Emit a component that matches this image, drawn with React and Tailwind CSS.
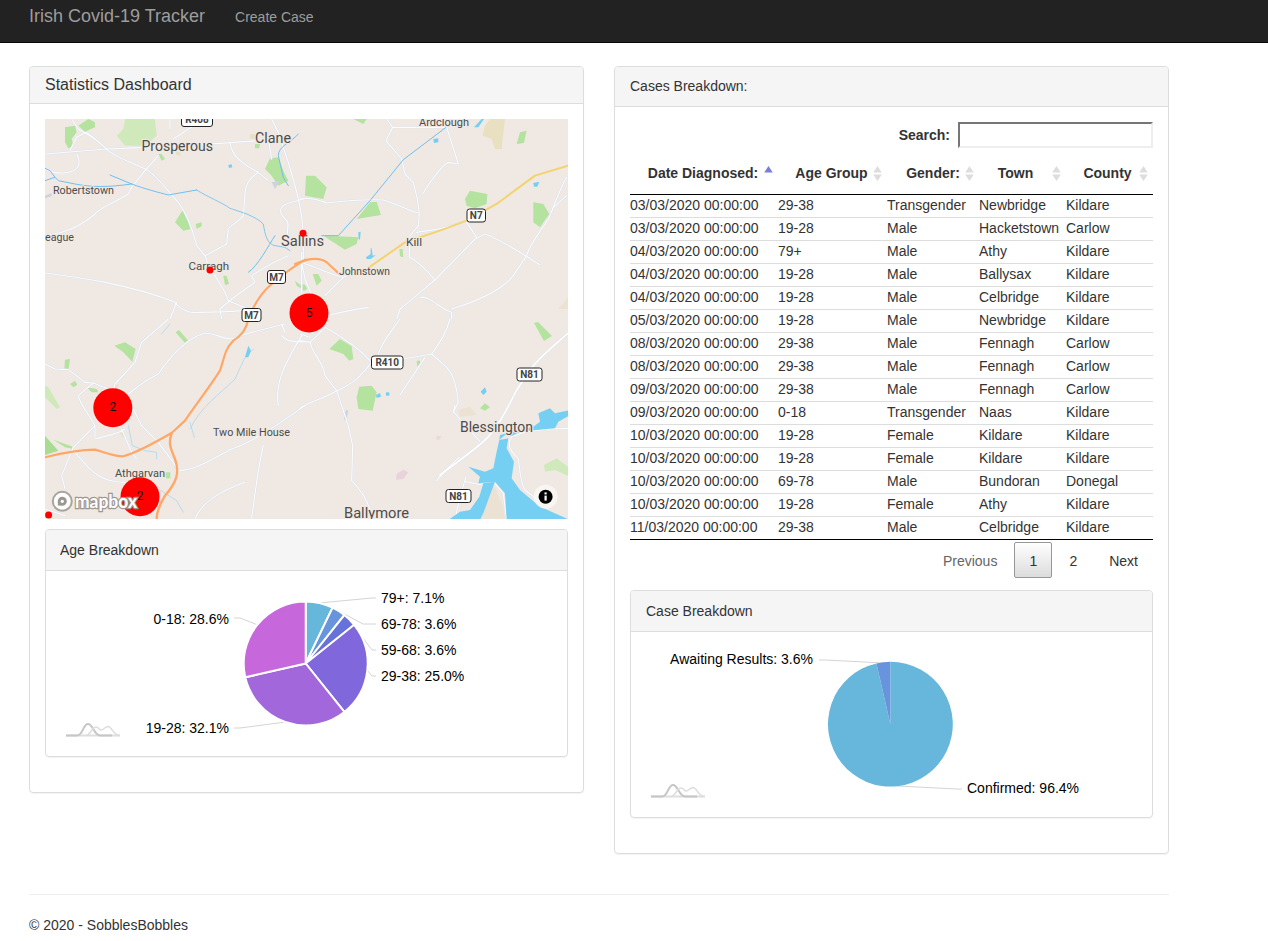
const rows = [
  ["03/03/2020 00:00:00", "29-38", "Transgender", "Newbridge", "Kildare"],
  ["03/03/2020 00:00:00", "19-28", "Male", "Hacketstown", "Carlow"],
  ["04/03/2020 00:00:00", "79+", "Male", "Athy", "Kildare"],
  ["04/03/2020 00:00:00", "19-28", "Male", "Ballysax", "Kildare"],
  ["04/03/2020 00:00:00", "19-28", "Male", "Celbridge", "Kildare"],
  ["05/03/2020 00:00:00", "19-28", "Male", "Newbridge", "Kildare"],
  ["08/03/2020 00:00:00", "29-38", "Male", "Fennagh", "Carlow"],
  ["08/03/2020 00:00:00", "29-38", "Male", "Fennagh", "Carlow"],
  ["09/03/2020 00:00:00", "29-38", "Male", "Fennagh", "Carlow"],
  ["09/03/2020 00:00:00", "0-18", "Transgender", "Naas", "Kildare"],
  ["10/03/2020 00:00:00", "19-28", "Female", "Kildare", "Kildare"],
  ["10/03/2020 00:00:00", "19-28", "Female", "Kildare", "Kildare"],
  ["10/03/2020 00:00:00", "69-78", "Male", "Bundoran", "Donegal"],
  ["10/03/2020 00:00:00", "19-28", "Female", "Athy", "Kildare"],
  ["11/03/2020 00:00:00", "29-38", "Male", "Celbridge", "Kildare"],
];

const G = "#b4e29f";
const L = "#cfe9bb";
const T = "#e8e0c0";
const P = "#ccd2e2";
const W = "#75cff2";

const crops = [
  {
    x: 45, y: 119,
    fills: [
      ["M60 25L90 20L95 40L80 60L85 80L70 88L60 70Z", G],
      ["M100 20L130 0L150 10L150 25L120 38Z", G],
      ["M240 0L330 0L335 50L300 80L240 80L215 50L235 30Z", L],
      ["M340 105L350 105L360 120L350 125Z", G],
      ["M390 310L412 275L430 300L438 330L415 335Z", G],
      ["M452 315L470 310L470 322L455 330Z", G],
      ["M675 118L700 115L715 155L730 185L700 200L680 170L660 150Z", G],
      ["M535 470L545 470L552 495L540 498Z", G],
      ["M750 485L780 510L780 515L755 500Z", G],
      ["M630 75L645 75L643 88L630 88Z", G],
      ["M615 45L630 45L630 60L615 60Z", T],
      ["M390 95L405 100L408 110L395 108Z", T],
      ["M680 190L705 185L690 210Z", P],
      ["M0 230L20 222L20 232L0 238Z", P],
    ],
    roads: [
      "M0 105C60 100 120 95 185 90C300 85 500 75 640 65",
      "M80 0L100 30L150 60L185 90C200 110 260 130 310 155C350 185 370 220 400 250C430 290 445 340 455 380L480 410L490 440L510 470L540 520L550 545L610 570",
      "M340 110L300 155L260 205L250 225C200 255 160 270 150 285C120 310 90 330 50 340L0 352",
      "M75 95L95 55L125 40L150 60",
      "M95 105C105 125 105 145 85 155C60 165 30 165 0 150",
      "M375 0L375 30M385 60L430 30L440 25",
      "M555 70C560 110 590 135 640 160L670 185M670 60L680 120M640 160C610 180 600 200 600 230L595 290C580 310 555 320 550 330L545 375L480 410",
      "M0 462C100 475 250 495 390 550C400 570 440 585 460 580C500 580 540 580 590 575",
      "M395 550L375 600",
      "M680 0L700 40L730 130C750 200 770 260 775 340L775 420",
      "M730 410C680 430 650 450 620 470L630 490L560 540L525 570L530 600",
      "M775 240L740 250C700 260 700 280 720 300C740 310 720 340 730 350",
    ],
    rivers: [
      "M0 185L30 175L40 185L90 195C140 205 190 205 260 195C300 210 340 220 370 228L455 213",
      "M455 213C490 235 530 250 555 268C590 280 630 290 655 315C660 345 665 375 690 380L720 385L735 395",
      "M0 148L15 155L30 175M195 168L260 195",
      "M760 45C740 70 700 80 700 110L715 175L730 200",
      "M690 350C670 380 640 440 610 460",
    ],
    water: ["M550 138L560 136L562 145L552 147Z"],
    orange: "M610 600C625 560 645 525 680 495C710 470 750 440 781 422",
  },
  {
    x: 300, y: 119,
    fills: [
      ["M555 20L570 0L615 0L605 90L585 90L575 60L548 50Z", T],
      ["M775 570L804 535L804 570Z", "#ece2d4"],
      ["M18 170L45 170L80 205L70 240L15 230Z", G],
      ["M210 250L230 248L243 288L170 300Z", G],
      ["M495 240L510 215L562 225L560 255L525 268L500 260Z", G],
      ["M700 250L730 255L748 285L720 325L700 310Z", G],
      ["M660 40L680 35L672 72L650 75Z", G],
      ["M70 350L115 352L175 355L170 375L135 392L100 370Z", G],
      ["M298 390L308 390L310 415L300 412Z", G],
      ["M38 465L55 465L65 485L50 500Z", G],
      ["M0 495L15 497L22 510L10 515Z", G],
      ["M160 0L200 0L190 15Z", G],
    ],
    roads: [
      "M0 240C40 235 60 245 80 252C140 245 200 240 250 243C290 255 330 275 355 282",
      "M260 0L278 25L355 25L440 25M278 25L258 65L305 120L315 165L340 190L352 240L358 282L355 320L330 350L328 415C360 430 385 460 405 483",
      "M440 25L475 135L445 130C420 145 390 190 368 225",
      "M130 475L200 450M0 430C50 445 90 465 130 475L75 530",
      "M405 483L525 360L555 345C600 360 660 400 720 437",
      "M405 483C370 510 340 540 300 570L290 600M360 535C390 530 420 570 455 580L455 600",
      "M530 355L500 310M455 570C520 550 600 520 640 470L680 410C690 370 730 330 750 290C770 240 780 210 800 175",
      "M800 230L760 265",
      "M80 590C120 580 170 570 205 565",
      "M350 340C380 335 420 335 500 305",
      "M5 400L5 520M5 430L15 480L35 530",
    ],
    rivers: ["M438 25L310 122L210 245L115 350L65 350"],
    water: [
      "M400 60L415 58L415 70L402 72Z",
      "M522 25L545 0L552 0L535 25Z",
      "M700 192L718 188L712 203L702 203Z",
      "M175 340L182 338L180 362L176 360Z",
      "M198 415L212 405L212 388L215 388L218 410L228 408L212 420L200 420Z",
    ],
    yellow: "M200 450L315 370L420 335L500 305L590 255L705 170L804 140",
    orange: "M-15 435C30 415 60 415 80 430L118 465",
  },
  {
    x: 45, y: 319,
    fills: [
      ["M208 80L240 70L272 90L262 128L235 100Z", G],
      ["M392 40L402 33L430 65L420 72Z", G],
      ["M60 122L75 120L70 155L58 150Z", G],
      ["M75 195L90 185L97 197L85 205Z", G],
      ["M125 205L155 210L160 220L140 220Z", G],
      ["M0 200L10 205L45 265L35 270L0 235Z", L],
      ["M0 350L40 395L0 408Z", "#a8dc92"],
      ["M25 362L80 382L85 390L60 385Z", G],
      ["M362 460L376 460L376 478L362 478Z", G],
      ["M205 205L220 195L215 210Z", T],
      ["M222 340L240 345L235 355Z", T],
    ],
    roads: [
      "M0 135L30 150L70 152L120 190L145 192L205 215L210 195L270 130L290 70L370 0",
      "M250 225C280 200 320 175 340 165C370 120 420 60 480 42C510 45 540 60 560 60L620 40L720 15",
      "M100 230L145 192M100 230C105 260 140 295 150 320L150 355M150 320L120 350L85 385L50 470L60 510",
      "M85 395L125 440C160 480 200 490 240 490",
      "M265 270L290 320L340 370L385 430L400 455",
      "M150 360C180 350 210 350 240 330",
      "M230 330L260 400L275 420",
      "M400 455C450 455 500 420 560 390C620 370 680 330 780 260",
      "M655 380C640 440 630 520 620 600",
      "M450 600C470 550 520 520 600 490",
      "M700 260C690 200 710 150 770 50",
      "M0 570L60 590",
      "M720 40L710 15M710 50C720 65 750 70 780 68",
    ],
    rivers: [],
    thin: [
      "M435 330C470 260 520 230 570 180L600 115L625 90",
      "M435 310L448 355",
      "M350 45L375 15",
      "M250 320L262 380L300 395L335 400L335 420",
      "M340 510L395 545L415 580",
    ],
    water: ["M600 115L610 80L618 95L610 115Z"],
    orange: "M0 415C60 400 110 392 150 392C180 400 205 412 235 412C280 400 330 370 380 342L420 305C450 260 490 210 525 155C540 110 540 90 565 65C590 50 605 30 610 0",
    orange2: "M380 342C370 370 375 385 390 420C405 460 395 490 360 530C345 555 335 575 335 600",
  },
  {
    x: 300, y: 319,
    fills: [
      ["M88 90L120 60L155 82L160 120L148 125L130 105Z", G],
      ["M178 203L215 200L230 220L218 275L175 270L170 235Z", G],
      ["M350 125L360 125L362 138L352 142Z", G],
      ["M290 465L310 452L325 460L310 480L288 482Z", "#e8d3dc"],
      ["M138 272L145 275L138 305L132 300Z", P],
      ["M410 350L425 352L420 362L408 362Z", "#e9ddd0"],
    ],
    roads: [
      "M75 25C120 50 170 80 215 130C190 160 170 190 110 215C70 240 30 245 0 268",
      "M30 70C40 110 70 130 75 170L110 215L135 290L145 320L158 380L155 485C180 510 210 550 215 600",
      "M310 120L395 105L440 145C460 165 470 200 475 250L460 280",
      "M375 115L345 160L300 228",
      "M235 105C250 60 280 30 300 0",
      "M410 485C430 460 470 420 480 415",
      "M0 65L30 70L75 25M0 45L30 55",
      "M395 105C420 70 440 40 450 0",
    ],
    rivers: [],
    water: ["M228 228L240 222L243 233L230 237Z", "M258 220H268V230H258Z"],
  },
  {
    x: 440, y: 380,
    fills: [
      ["M120 85L135 70L150 82L135 92Z", G],
      ["M312 255L350 235L390 265L390 290L345 270L315 275Z", L],
      ["M55 90L90 80L110 105L60 110Z", "#ebe2d3"],
      ["M130 340L165 320L190 380L195 420L125 420Z", "#ebe2d3"],
    ],
    roads: [
      "M215 170C260 150 330 145 390 145",
      "M215 170C200 190 210 215 235 235C240 270 240 310 255 330L300 365",
      "M45 75L40 95L120 185",
      "M75 305L140 318L160 305L190 340L200 420",
      "M0 285C40 255 90 220 130 185",
      "M78 290C60 350 50 390 45 420",
    ],
    rivers: [],
    water: [
      "M295 100L330 85L345 100L390 90L390 105L355 125L345 145L290 150L240 155L215 168L195 165L178 180L180 165L200 160L280 140L300 125Z",
      "M178 180L205 175L200 205L222 245L215 295L240 330L300 380L390 420L200 420L195 340L165 305L115 310L120 290L85 260L135 275L160 265L170 215Z",
      "M25 420L60 395L90 390L118 350L130 310L165 305L150 345L130 400L120 420Z",
      "M122 35L135 22L140 35L130 45Z",
    ],
    bigRoad: "M0 285C40 255 90 220 130 185C170 150 200 90 230 30L250 0",
  },
];

const labels = [
  ["Ardclough", 419, 122.5, 50, 11],
  ["Clane", 255, 138, 36, 15],
  ["Prosperous", 141.5, 146, 71.5, 14],
  ["Robertstown", 53, 190.5, 61, 11],
  ["eague", 45, 237, 29, 11],
  ["Sallins", 281, 241, 43, 14],
  ["Kill", 406, 241.5, 16, 11.5],
  ["Carragh", 188.5, 266, 40.5, 11],
  ["Johnstown", 339, 271.5, 51, 11],
  ["Two Mile House", 213, 432, 77, 11],
  ["Blessington", 460, 427, 73, 14],
  ["Athgarvan", 115, 473, 50, 11.5],
  ["Ballymore", 344, 513, 65, 14],
];

const shields = [
  ["R408", 181, 112, 31, 14],
  ["M7", 267, 270, 18, 13],
  ["M7", 241.5, 308, 19, 13],
  ["N7", 466.5, 208.5, 18.5, 13],
  ["R410", 371, 355.5, 31.5, 13],
  ["N81", 516.5, 367.5, 25, 13],
  ["N81", 445.5, 489, 25, 13],
];

const clusters = [
  [309, 313, "5"],
  [112.8, 407.7, "2"],
  [140, 496.7, "2"],
];

function Layer({ render }) {
  return crops.map((c) => (
    <g key={`${c.x}-${c.y}`} transform={`translate(${c.x} ${c.y}) scale(0.3333)`}>
      {render(c)}
    </g>
  ));
}

function line(d, stroke, w, k) {
  return <path key={k} d={d} fill="none" stroke={stroke} strokeWidth={w} strokeLinejoin="round" strokeLinecap="round" />;
}

function MapView() {
  return (
    <svg viewBox="45 119 523 400" className="block w-[523px] h-[400px] bg-[#f0e9e3]">
      <Layer render={(c) => c.fills.map(([d, f], i) => <path key={i} d={d} fill={f} />)} />
      <path d="M534 323L538 322L552 336L544 341Z" fill={G} />
      <Layer render={(c) => c.roads.map((d, i) => line(d, "#d9e1ec", 6, i))} />
      <Layer render={(c) => c.bigRoad && line(c.bigRoad, "#dfe5ee", 8, "b")} />
      <path d="M523 380C535 360 555 345 568 333" fill="none" stroke="#dfe5ee" strokeWidth="2.6" />
      <Layer render={(c) => c.roads.map((d, i) => line(d, "#fbfcfd", 3.4, i))} />
      <Layer render={(c) => c.bigRoad && line(c.bigRoad, "#ffffff", 5, "b")} />
      <path d="M523 380C535 360 555 345 568 333" fill="none" stroke="#fff" strokeWidth="1.6" />
      <Layer render={(c) => (c.thin || []).map((d, i) => line(d, "#a9d9f2", 2.5, i))} />
      <Layer render={(c) => c.rivers.map((d, i) => line(d, "#6cc0ee", i === 1 ? 2.5 : 3, i))} />
      <Layer render={(c) => c.water.map((d, i) => <path key={i} d={d} fill={W} />)} />
      <Layer render={(c) => c.yellow && line(c.yellow, "#f3d36f", 6, "y")} />
      <Layer render={(c) => c.orange && line(c.orange, "#ffa766", 6.5, "o")} />
      <Layer render={(c) => c.orange2 && line(c.orange2, "#ffa766", 7, "o2")} />
      {labels.map(([t, x, y, w, s]) => (
        <text key={t} x={x} y={y} dominantBaseline="central" textLength={w} lengthAdjust="spacingAndGlyphs" fontSize={s} fill="#4c4c4c" stroke="#f0e9e3" strokeWidth="2" paintOrder="stroke" className="font-['Roboto']">
          {t}
        </text>
      ))}
      {shields.map(([t, x, y, w, h], i) => (
        <g key={i}>
          <rect x={x + 0.5} y={y + 0.5} width={w} height={h} rx="2.5" fill="#fff" stroke="#222" strokeWidth="1" />
          <text x={x + w / 2 + 0.5} y={y + h / 2 + 0.5} textAnchor="middle" dominantBaseline="central" fontSize="10" fontWeight="700" fill="#444" className="font-['Roboto']">
            {t}
          </text>
        </g>
      ))}
      {[[303, 233.3], [210, 270], [48.6, 515]].map(([x, y]) => (
        <circle key={x} cx={x} cy={y} r="3.5" fill="#ff0000" />
      ))}
      {clusters.map(([x, y, t]) => (
        <g key={x}>
          <circle cx={x} cy={y} r="19.5" fill="#ff0000" />
          <text x={x} y={y - 0.5} textAnchor="middle" dominantBaseline="central" fontSize="12" fill="#111" className="font-['Roboto']">
            {t}
          </text>
        </g>
      ))}
      <circle cx="62.3" cy="501.3" r="9.5" fill="#fff" stroke="#a8a39d" strokeWidth="2" />
      <path d="M57.8 505.6L57.8 501.3A4.5 4.5 0 1 1 62.3 505.8Z" fill="#9c9791" />
      <circle cx="62.3" cy="501.3" r="1.6" fill="#fff" />
      <text x="75" y="501" dominantBaseline="central" textLength="62" lengthAdjust="spacingAndGlyphs" fontSize="18" fontWeight="700" fill="#fff" stroke="#9c9791" strokeWidth="2.5" paintOrder="stroke" className="font-['Lato']">
        mapbox
      </text>
      <circle cx="545.6" cy="496.7" r="12" fill="#fff" fillOpacity="0.55" />
      <circle cx="545.6" cy="496.7" r="7" fill="#000" />
      <rect x="544.5" y="495.6" width="2.2" height="5" fill="#fff" />
      <rect x="544.5" y="492.4" width="2.2" height="2" fill="#fff" />
    </svg>
  );
}

function slice(cx, cy, r, a0, a1) {
  const p = (a) => [cx + r * Math.sin(a * 2 * Math.PI), cy - r * Math.cos(a * 2 * Math.PI)];
  const [x0, y0] = p(a0);
  const [x1, y1] = p(a1);
  return `M${cx} ${cy}L${x0} ${y0}A${r} ${r} 0 ${a1 - a0 > 0.5 ? 1 : 0} 1 ${x1} ${y1}Z`;
}

function Pie({ cx, cy, r, data, stroke }) {
  let a = 0;
  return (
    <g>
      {data.map(([v, c], i) => {
        const d = slice(cx, cy, r, a, a + v);
        a += v;
        return <path key={i} d={d} fill={c} stroke={stroke ? "#fff" : "none"} strokeWidth={stroke ? 2 : 0} />;
      })}
    </g>
  );
}

function ChartMark({ x, y }) {
  return (
    <g transform={`translate(${x} ${y})`} fill="none">
      <path d="M0 12.5H54" stroke="#dedede" strokeWidth="2" />
      <path d="M0 12.5H11C17 12.5 17 1 22 1C27 1 28 12.5 34 12.5H46" stroke="#c6c6c6" strokeWidth="2" />
      <path d="M20 12.5C24 12.5 26 4 30 4C33 4 33 7 35 7C38 7 39 3.5 42 3.5C46 3.5 47 12.5 54 12.5" stroke="#dddddd" strokeWidth="1.5" />
    </g>
  );
}

function Leader({ d }) {
  return <path d={d} fill="none" stroke="#d4d4d4" strokeWidth="1" />;
}

function AgeChart() {
  const data = [
    [0.0714, "#67B7DC"],
    [0.0357, "#6794DC"],
    [0.0357, "#6771DC"],
    [0.25, "#8067DC"],
    [0.3214, "#A367DC"],
    [0.2858, "#C767DC"],
  ];
  const t = [
    ["79+: 7.1%", 381, 598, "start"],
    ["69-78: 3.6%", 381, 624, "start"],
    ["59-68: 3.6%", 381, 650, "start"],
    ["29-38: 25.0%", 381, 676, "start"],
    ["0-18: 28.6%", 229, 619, "end"],
    ["19-28: 32.1%", 229, 728, "end"],
  ];
  return (
    <svg viewBox="46 571 521 185" className="block w-[521px] h-[185px]">
      <Leader d="M319 603L372 598H376" />
      <Leader d="M337 610L363 624H376" />
      <Leader d="M353 625L372 650H376" />
      <Leader d="M367 670L372 676H376" />
      <Leader d="M258 625L240 618H234" />
      <Leader d="M286 722L240 728H234" />
      <Pie cx={305.7} cy={663.5} r={62} data={data} stroke />
      {t.map(([s, x, y, a]) => (
        <text key={s} x={x} y={y} textAnchor={a} dominantBaseline="central" fontSize="14" fill="#000">
          {s}
        </text>
      ))}
      <ChartMark x={66} y={723} />
    </svg>
  );
}

function CaseChart() {
  return (
    <svg viewBox="631 632 521 185" className="block w-[521px] h-[185px]">
      <Leader d="M883 663L825.5 660H819" />
      <Leader d="M897 786L957 789H962" />
      <Pie cx={890.4} cy={724.2} r={62.4} data={[[0.964, "#67B7DC"], [0.036, "#6794DC"]]} />
      <text x="813" y="659" textAnchor="end" dominantBaseline="central" fontSize="14" fill="#000">
        Awaiting Results: 3.6%
      </text>
      <text x="967" y="788" dominantBaseline="central" fontSize="14" fill="#000">
        Confirmed: 96.4%
      </text>
      <ChartMark x={651} y={784} />
    </svg>
  );
}

function Sort({ active }) {
  return (
    <svg viewBox="0 0 8 15" className="absolute right-[5px] top-[9px] w-[9px] h-[16px]">
      <path d="M4 0L8 6H0Z" fill={active ? "#7a7ed8" : "#dddddd"} />
      {!active && <path d="M4 14L8 8H0Z" fill="#dddddd" />}
    </svg>
  );
}

function Th({ children, active, className }) {
  return (
    <th className={`relative h-[38px] pb-[6px] border-b border-black font-bold text-center align-middle ${className || "pr-[2px]"}`}>
      {children}
      <Sort active={active} />
    </th>
  );
}

function InnerPanel({ title, titleClass, children }) {
  return (
    <div className="border border-[#dddddd] rounded-[4px] shadow-[0_1px_1px_rgba(0,0,0,0.05)] mb-[20px]">
      <div className={`bg-[#f5f5f5] border-b border-[#dddddd] pr-[15px] py-[10px] rounded-t-[3px] leading-[20px] ${titleClass}`}>{title}</div>
      {children}
    </div>
  );
}

export default function App() {
  return (
    <div className="font-['Liberation_Sans',Arial,sans-serif] text-[14px] leading-[20px] text-[#333333] bg-white">
      <nav className="h-[43px] bg-[#222222] border-b border-[#080808] flex items-start pl-[29px]">
        <span className="text-[18px] leading-[33px] text-[#9d9d9d]">Irish Covid-19 Tracker</span>
        <span className="ml-[30px] leading-[34px] text-[#9d9d9d]">Create Case</span>
      </nav>
      <div className="ml-[29px] w-[1140px] pt-[23px]">
        <div className="grid grid-cols-2 gap-[30px] items-start">
          <section className="border border-[#dddddd] rounded-[4px] shadow-[0_1px_1px_rgba(0,0,0,0.05)] mb-[20px]">
            <div className="bg-[#f5f5f5] border-b border-[#dddddd] px-[15px] py-[10px] text-[16px] leading-[16px] rounded-t-[3px]">Statistics Dashboard</div>
            <div className="p-[15px]">
              <MapView />
              <div className="mt-[10px]">
                <InnerPanel title="Age Breakdown" titleClass="pl-[14px]">
                  <AgeChart />
                </InnerPanel>
              </div>
            </div>
          </section>
          <section className="border border-[#dddddd] rounded-[4px] shadow-[0_1px_1px_rgba(0,0,0,0.05)] mb-[20px]">
            <div className="bg-[#f5f5f5] border-b border-[#dddddd] pl-[15px] pr-[15px] pt-[9px] pb-[10px] rounded-t-[3px]">Cases Breakdown:</div>
            <div className="p-[15px]">
              <div className="flex justify-end items-center h-[26px]">
                <label className="font-bold mr-[8px]">Search:</label>
                <input className="w-[195px] h-[26px] border-2 border-t-[#767676] border-l-[#767676] border-r-[#eeeeee] border-b-[#eeeeee] bg-white outline-none" />
              </div>
              <table className="w-[523px] table-fixed border-separate border-spacing-0 mt-[9px]">
                <colgroup>
                  <col className="w-[148px]" />
                  <col className="w-[109px]" />
                  <col className="w-[92px]" />
                  <col className="w-[87px]" />
                  <col className="w-[87px]" />
                </colgroup>
                <thead>
                  <tr>
                    <Th active>Date Diagnosed:</Th>
                    <Th>Age Group</Th>
                    <Th className="pr-0">Gender:</Th>
                    <Th className="pr-[14px]">Town</Th>
                    <Th className="pr-[4px]">County</Th>
                  </tr>
                </thead>
                <tbody>
                  {rows.map((r, i) => (
                    <tr key={i}>
                      {r.map((c, j) => (
                        <td key={j} className={`h-[23px] pt-0 px-0 pb-[2px] align-middle whitespace-nowrap border-b ${i === rows.length - 1 ? "border-black" : "border-[#dddddd]"}`}>
                          {c}
                        </td>
                      ))}
                    </tr>
                  ))}
                </tbody>
              </table>
              <div className="flex justify-end mt-[2px] mb-[12px] h-[36px]">
                <span className="px-[14px] pt-[8px] pb-[6px] ml-[2px] border border-transparent text-[#666666]">Previous</span>
                <span className="w-[38px] text-center pt-[8px] pb-[6px] ml-[2px] border border-[#979797] rounded-[2px] bg-gradient-to-b from-white to-[#dcdcdc]">1</span>
                <span className="px-[14px] pt-[8px] pb-[6px] ml-[2px] border border-transparent">2</span>
                <span className="px-[14px] pt-[8px] pb-[6px] ml-[2px] border border-transparent">Next</span>
              </div>
              <InnerPanel title="Case Breakdown" titleClass="pl-[15px]">
                <CaseChart />
              </InnerPanel>
            </div>
          </section>
        </div>
        <hr className="mt-[20px] mb-[20px] border-0 border-t border-[#eeeeee]" />
        <p className="pb-[6px]">© 2020 - SobblesBobbles</p>
      </div>
    </div>
  );
}
